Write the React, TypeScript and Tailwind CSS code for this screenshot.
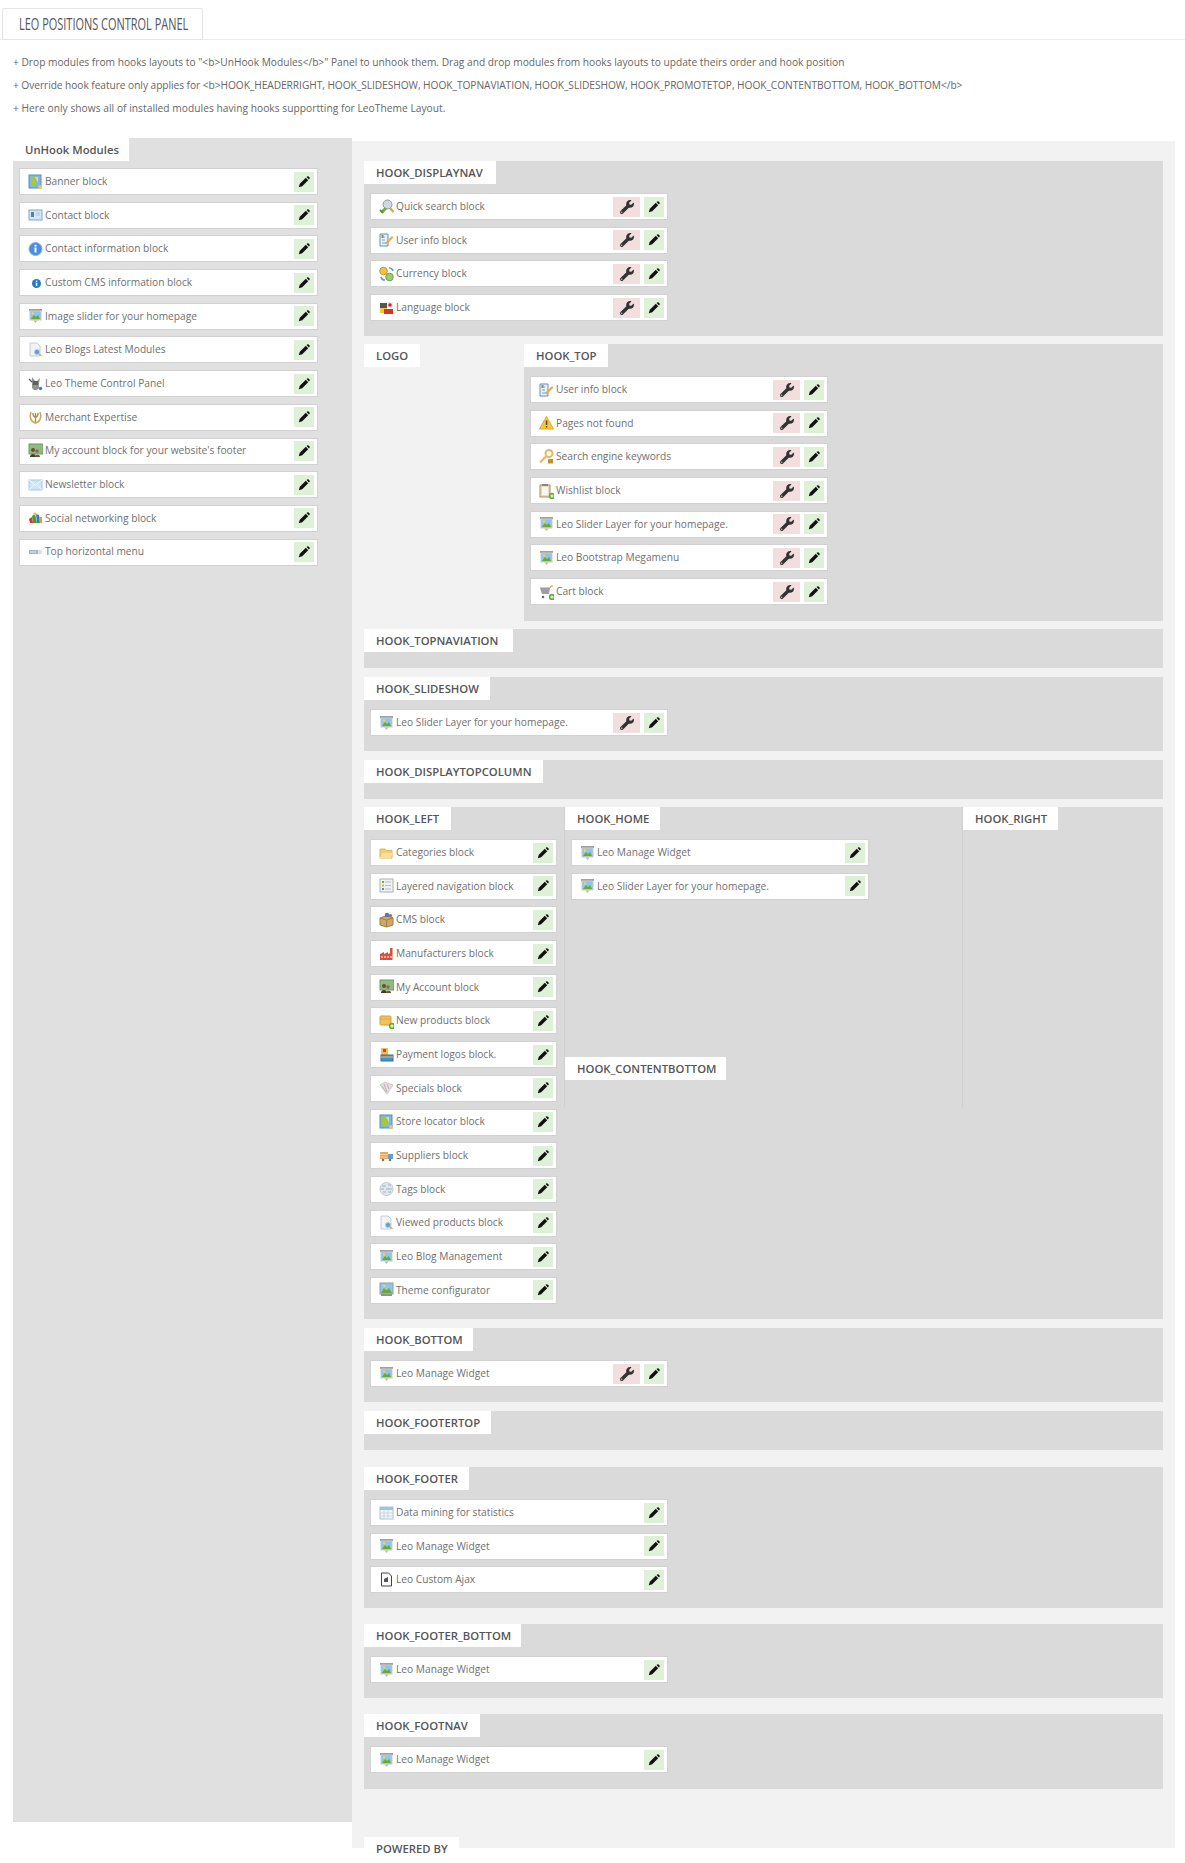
import type { ReactNode } from 'react';
import { FaWrench } from 'react-icons/fa';

type IconName =
  | 'map' | 'card' | 'infoBig' | 'info' | 'slider' | 'page' | 'tool' | 'medal' | 'people' | 'mail'
  | 'social' | 'menu' | 'search' | 'form' | 'coins' | 'flag' | 'warn' | 'key' | 'clip' | 'cart'
  | 'folder' | 'list' | 'box' | 'factory' | 'newbox' | 'pay' | 'tag' | 'truck' | 'cloud' | 'screen'
  | 'table' | 'doc';

const Plus = () => (
  <>
    <circle cx="13" cy="13" r="3.2" fill="#5cb030" />
    <path d="M11.3 13h3.4M13 11.3v3.4" stroke="#fff" strokeWidth="1" />
  </>
);

function Icon({ name }: { name: IconName }) {
  const parts: Record<IconName, ReactNode> = {
    map: (
      <>
        <rect x="1" y="1" width="12" height="13" fill="#7fb8df" stroke="#5a8fb5" />
        <path d="M3 2l4 1 2 9H3z" fill="#a8c83a" />
        <path d="M7 3l3 0v6z" fill="#e8d98a" />
        <circle cx="12" cy="13" r="2" fill="#f3c562" />
      </>
    ),
    card: (
      <>
        <rect x="1" y="3" width="13" height="10" fill="#d6e6f4" stroke="#7aa7cf" />
        <rect x="3" y="5" width="3" height="5" fill="#5b7fa3" />
        <path d="M8 6h4M8 8h4" stroke="#a9c4dc" />
      </>
    ),
    infoBig: (
      <>
        <circle cx="7.5" cy="8" r="6.5" fill="#4a8fd8" stroke="#7fb0e0" />
        <rect x="6.5" y="6.5" width="2" height="5" fill="#fff" />
        <rect x="6.5" y="3.8" width="2" height="1.8" fill="#fff" />
      </>
    ),
    info: (
      <>
        <circle cx="8.5" cy="8.5" r="4.5" fill="#1f7fc4" />
        <rect x="7.8" y="7.6" width="1.5" height="3.4" fill="#fff" />
        <rect x="7.8" y="5.6" width="1.5" height="1.3" fill="#fff" />
      </>
    ),
    slider: (
      <>
        <path d="M1 2h13" stroke="#777" strokeWidth="1.4" />
        <rect x="2" y="3" width="11" height="9" fill="#8cc6ea" stroke="#c9c9c9" />
        <path d="M3 11l3-4 2 2 2-2 2 4z" fill="#6ea92c" />
        <circle cx="5" cy="5.5" r="1.2" fill="#f4d54a" />
        <path d="M5.5 12.5h4L7.5 15z" fill="#bbb" />
      </>
    ),
    page: (
      <>
        <path d="M2 1h7l3 3v10H2z" fill="#f2f3f6" stroke="#c8ccd4" />
        <circle cx="9" cy="10" r="2.6" fill="#5aa0d8" stroke="#bcd" />
        <path d="M11 12l2.5 2" stroke="#e8a93a" strokeWidth="1.5" />
      </>
    ),
    tool: (
      <>
        <path d="M4 1l3 4h2l3-3-1 5v5l-2 2H6l-2-2V6z" fill="#8f9492" />
        <rect x="5" y="5" width="5" height="4" fill="#5b605e" />
        <path d="M1 3l3 3" stroke="#555" strokeWidth="1.2" />
        <circle cx="12.5" cy="12.5" r="1.8" fill="#3c84c8" />
      </>
    ),
    medal: (
      <>
        <path d="M3 3C1 8 3 13 7.5 14 12 13 14 8 12 3" fill="none" stroke="#c9a866" strokeWidth="1.6" />
        <path d="M7.5 4v9M5 4c0 3 1 4 2.500 4S10 7 10 4" fill="none" stroke="#b48a3c" strokeWidth="1.4" />
      </>
    ),
    people: (
      <>
        <rect x="1" y="1" width="14" height="10" fill="#8fbb82" stroke="#6d9a62" />
        <circle cx="5" cy="7" r="2" fill="#6d4b2f" />
        <path d="M2 14c0-4 6-4 6 0z" fill="#4b3a2b" />
        <circle cx="9" cy="8" r="1.700" fill="#8a6a45" />
        <path d="M7 14c0-3 5-3 5 0z" fill="#6b5236" />
      </>
    ),
    mail: (
      <>
        <rect x="1" y="3" width="13" height="10" fill="#cfe4f6" stroke="#a5c8e4" />
        <path d="M1 3l6.500 5L14 3M1 13l4.500-5M14 13L9.500 8" fill="none" stroke="#f2f8fd" />
      </>
    ),
    social: (
      <>
        <path d="M1 9l3-2 1 6H2z" fill="#d8392a" />
        <path d="M4 6l3-2 2 9H5z" fill="#4a9a34" />
        <path d="M8 4l3 1 1 8H9z" fill="#2d7fc4" />
        <path d="M11 7l3 0v6h-2z" fill="#e8a020" />
        <circle cx="7" cy="4" r="1.500" fill="#f2c230" />
      </>
    ),
    menu: (
      <>
        <rect x="1" y="6" width="9" height="4" fill="#9fb4c4" />
        <path d="M10 7h4M10 9h4" stroke="#b9c2c9" />
        <path d="M2 8h6" stroke="#eef2f5" />
      </>
    ),
    search: (
      <>
        <circle cx="8.500" cy="5.500" r="4.500" fill="#cfd9e4" stroke="#8a9aac" />
        <path d="M7 9l-4 4" stroke="#6fae3c" strokeWidth="3" />
        <path d="M11 9l3.500 4" stroke="#d9a03c" strokeWidth="2" />
        <path d="M1 11l3 3" stroke="#4f9a2c" strokeWidth="2" />
      </>
    ),
    form: (
      <>
        <path d="M1 2h8v12H1z" fill="#eaf2fa" stroke="#5b8fc0" />
        <path d="M3 5h3M3 8h3M3 11h4" stroke="#7aa0c4" />
        <path d="M6 11l7-7 1.500 1.500-7 7z" fill="#e9a93c" />
        <rect x="2.500" y="3" width="2" height="3" fill="#b9852e" />
      </>
    ),
    coins: (
      <>
        <circle cx="4.500" cy="5" r="3.800" fill="#f0c24a" stroke="#c99a2a" />
        <circle cx="10.500" cy="11" r="3.800" fill="#9ccb78" stroke="#6fa24a" />
        <path d="M10 2a4 4 0 014 3M6 14a4 4 0 01-4-3" fill="none" stroke="#5b9ad4" strokeWidth="1.600" />
      </>
    ),
    flag: (
      <>
        <rect x="1" y="3" width="7" height="5" fill="#555" />
        <rect x="1" y="8" width="7" height="5" fill="#f3c83a" />
        <rect x="8" y="2" width="6" height="6" fill="#e8eaec" />
        <circle cx="11" cy="5" r="1.800" fill="#e0202a" />
        <rect x="5" y="9" width="9" height="5" fill="#d8322c" />
      </>
    ),
    warn: (
      <>
        <path d="M7.500 1.500L14.500 14H.5z" fill="#f6c83c" stroke="#e0a820" />
        <rect x="6.800" y="5.500" width="1.500" height="4.500" fill="#5a4510" />
        <rect x="6.800" y="11" width="1.500" height="1.500" fill="#5a4510" />
      </>
    ),
    key: (
      <>
        <circle cx="10" cy="4.500" r="3.500" fill="none" stroke="#e8b85c" strokeWidth="2" />
        <path d="M7.500 7L1 13.500" stroke="#e8b85c" strokeWidth="2.200" />
        <rect x="9" y="10" width="5" height="4.500" fill="#c78f2c" />
      </>
    ),
    clip: (
      <>
        <rect x="1" y="2" width="10" height="12" fill="#e9dcc0" stroke="#a98f62" />
        <rect x="3" y="1" width="6" height="2" fill="#888" />
        <rect x="3" y="4" width="6" height="8" fill="#f6f6f2" />
        <Plus />
      </>
    ),
    cart: (
      <>
        <path d="M1 4h10l1-2h2" fill="none" stroke="#d98a3c" />
        <path d="M1 4h10l-1 6H3z" fill="#9aa0a4" />
        <circle cx="4" cy="13" r="1.300" fill="#666" />
        <Plus />
      </>
    ),
    folder: (
      <>
        <path d="M1 4h5l1 1.500h6V13H1z" fill="#f4cf72" stroke="#dcb45a" />
        <path d="M1 13l2-5h11l-2 5z" fill="#fadf98" />
      </>
    ),
    list: (
      <>
        <rect x="1" y="1" width="13" height="13" fill="#f0f2f2" stroke="#a9b2b6" />
        <path d="M3 4h2" stroke="#6fae3c" strokeWidth="2" />
        <path d="M3 7.500h2" stroke="#e8a93a" strokeWidth="2" />
        <path d="M3 11h2" stroke="#4a90d0" strokeWidth="2" />
        <path d="M6 4h6M6 7.500h6M6 11h6" stroke="#b5bdc2" />
      </>
    ),
    box: (
      <>
        <path d="M1 6l6.500-2.500L14 6v7l-6.500 2L1 13z" fill="#cfa868" stroke="#a47f44" />
        <path d="M7.500 8v7M1 6l6.500 2L14 6" fill="none" stroke="#a47f44" />
        <circle cx="8" cy="3" r="2.200" fill="#3d7fc4" />
        <circle cx="11.500" cy="3.500" r="1.600" fill="#d8552c" />
      </>
    ),
    factory: (
      <>
        <path d="M1 14V8l4-2v2l4-2v2l2-1V2h2.500v12z" fill="#d8513c" />
        <path d="M2 11h11" stroke="#f3c4b8" strokeDasharray="2 1" strokeWidth="1.400" />
      </>
    ),
    newbox: (
      <>
        <rect x="1" y="3" width="11" height="9" rx="1" fill="#f0c45c" stroke="#cf9f3c" />
        <path d="M1 6h11" stroke="#d8ac4c" />
        <Plus />
      </>
    ),
    pay: (
      <>
        <rect x="2" y="1" width="7" height="7" fill="#f4c04a" />
        <rect x="4" y="2" width="3" height="3" fill="#d8402c" />
        <rect x="2" y="8" width="12" height="6" fill="#4a90d0" stroke="#3570a8" />
        <path d="M2 10h12" stroke="#f0c04a" />
      </>
    ),
    tag: (
      <>
        <path d="M1 5l5-3 8 3-6 9z" fill="#dfe2e2" stroke="#c9cdcd" />
        <path d="M5 4l3 8M8 4l2 5" stroke="#d9a3ba" />
        <path d="M3 6l4 6" stroke="#a8cf9c" />
      </>
    ),
    truck: (
      <>
        <rect x="1" y="4" width="8" height="7" fill="#eda85c" />
        <path d="M1 6.500h8M1 9h8" stroke="#f6cf9c" />
        <rect x="9" y="6" width="5" height="5" fill="#6a9ccf" />
        <circle cx="4" cy="12" r="1.300" fill="#777" />
        <circle cx="11" cy="12" r="1.300" fill="#777" />
      </>
    ),
    cloud: (
      <>
        <circle cx="7.500" cy="8" r="6.500" fill="#dfe8ee" stroke="#bcc8d0" />
        <path d="M3 5h4M9 4h3M2 8h3M7 8h6M4 11h3M9 11h3" stroke="#9fb0bc" />
      </>
    ),
    screen: (
      <>
        <rect x="1" y="1" width="13" height="11" fill="#8cc6ea" stroke="#8f9ca6" />
        <path d="M2 11l3-5 2.500 2.500L10 6l3 5z" fill="#6ea92c" />
        <circle cx="5" cy="4" r="1.300" fill="#f4d54a" />
        <rect x="2" y="12" width="11" height="2" fill="#8d9498" />
      </>
    ),
    table: (
      <>
        <rect x="1" y="2" width="13" height="12" fill="#f4f8fb" stroke="#a9c4d8" />
        <rect x="1" y="2" width="13" height="3" fill="#9cc4e2" />
        <path d="M5 5v9M9 5v9M1 8h13M1 11h13" stroke="#c4d6e4" />
      </>
    ),
    doc: (
      <>
        <path d="M2.500 1h7l3 3v10h-10z" fill="#fafafa" stroke="#444" />
        <path d="M5 7l4-2v5H5z" fill="#555" />
      </>
    ),
  };
  return (
    <svg width="15" height="16" viewBox="0 0 15 16" className="shrink-0">
      {parts[name]}
    </svg>
  );
}

// slim glyphicon style pencil, tip at the bottom left
const Pencil = () => (
  <svg width="12" height="12" viewBox="0 0 12 12" fill="currentColor">
    <path d="M.8 11.200l1-3.400 6-6 2.400 2.400-6 6z" />
    <path d="M8.600 1.100l.6-.6a1 1 0 011.400 0l.9.900a1 1 0 010 1.400l-.6.6z" />
  </svg>
);

type Mod = { icon: IconName; label: string };

function Item({ icon, label, wrench, className }: Mod & { wrench?: boolean; className: string }) {
  return (
    <div className={`flex items-center h-[27px] mb-[6.7px] pl-[8px] pr-[3px] bg-white border border-[#d2d2d2] ${className}`}>
      <Icon name={icon} />
      <span className="ml-[2px] text-[10.2px] text-[#707070] whitespace-nowrap">{label}</span>
      {wrench && (
        <span className="ml-auto flex items-center justify-center w-[27px] h-[20px] bg-[#f2dede] text-[#333]">
          <FaWrench size={14} />
        </span>
      )}
      <span className={`${wrench ? 'ml-[4px]' : 'ml-auto'} flex items-center justify-center w-[20px] h-[20px] bg-[#dff0d8] text-[#111]`}>
        <Pencil />
      </span>
    </div>
  );
}

function Tab({ children, className }: { children: ReactNode; className: string }) {
  return (
    <div className={`h-[23px] pl-[12px] pt-[2px] flex items-center bg-white text-[11.3px] font-semibold text-[#555] whitespace-nowrap ${className}`}>
      {children}
    </div>
  );
}

function Items({ mods, wrench, className }: { mods: Mod[]; wrench?: boolean; className: string }) {
  return (
    <div className="pt-[9px] pl-[6px]">
      {mods.map((m) => (
        <Item key={m.label} {...m} wrench={wrench} className={className} />
      ))}
    </div>
  );
}

const unhook: Mod[] = [
  { icon: 'map', label: 'Banner block' },
  { icon: 'card', label: 'Contact block' },
  { icon: 'infoBig', label: 'Contact information block' },
  { icon: 'info', label: 'Custom CMS information block' },
  { icon: 'slider', label: 'Image slider for your homepage' },
  { icon: 'page', label: 'Leo Blogs Latest Modules' },
  { icon: 'tool', label: 'Leo Theme Control Panel' },
  { icon: 'medal', label: 'Merchant Expertise' },
  { icon: 'people', label: "My account block for your website's footer" },
  { icon: 'mail', label: 'Newsletter block' },
  { icon: 'social', label: 'Social networking block' },
  { icon: 'menu', label: 'Top horizontal menu' },
];

const displayNav: Mod[] = [
  { icon: 'search', label: 'Quick search block' },
  { icon: 'form', label: 'User info block' },
  { icon: 'coins', label: 'Currency block' },
  { icon: 'flag', label: 'Language block' },
];

const hookTop: Mod[] = [
  { icon: 'form', label: 'User info block' },
  { icon: 'warn', label: 'Pages not found' },
  { icon: 'key', label: 'Search engine keywords' },
  { icon: 'clip', label: 'Wishlist block' },
  { icon: 'slider', label: 'Leo Slider Layer for your homepage.' },
  { icon: 'slider', label: 'Leo Bootstrap Megamenu' },
  { icon: 'cart', label: 'Cart block' },
];

const hookLeft: Mod[] = [
  { icon: 'folder', label: 'Categories block' },
  { icon: 'list', label: 'Layered navigation block' },
  { icon: 'box', label: 'CMS block' },
  { icon: 'factory', label: 'Manufacturers block' },
  { icon: 'people', label: 'My Account block' },
  { icon: 'newbox', label: 'New products block' },
  { icon: 'pay', label: 'Payment logos block.' },
  { icon: 'tag', label: 'Specials block' },
  { icon: 'map', label: 'Store locator block' },
  { icon: 'truck', label: 'Suppliers block' },
  { icon: 'cloud', label: 'Tags block' },
  { icon: 'page', label: 'Viewed products block' },
  { icon: 'slider', label: 'Leo Blog Management' },
  { icon: 'screen', label: 'Theme configurator' },
];

const slider: Mod = { icon: 'slider', label: 'Leo Slider Layer for your homepage.' };
const widget: Mod = { icon: 'slider', label: 'Leo Manage Widget' };

export default function App() {
  return (
    <div className="w-[1185px] h-[1863px] overflow-hidden bg-white font-['Open_Sans',sans-serif]">
      {/* page heading */}
      <div className="pt-[8px] pl-[2px] h-[40px] border-b border-[#ebebeb]">
        <div className="w-[201px] h-[32px] pl-[16px] flex items-center bg-white border border-[#e4e4e4] rounded-t-[2px] text-[16px] text-[#555] whitespace-nowrap">
          <span className="inline-block origin-left scale-x-[0.685]">LEO POSITIONS CONTROL PANEL</span>
        </div>
      </div>

      <div className="pl-[13px] pt-[11px] h-[98px] text-[10.2px] leading-[23px] text-[#666] whitespace-nowrap">
        <p>+ Drop modules from hooks layouts to "&lt;b&gt;UnHook Modules&lt;/b&gt;" Panel to unhook them. Drag and drop modules from hooks layouts to update theirs order and hook position</p>
        <p className="tracking-[-0.055px]">+ Override hook feature only applies for &lt;b&gt;HOOK_HEADERRIGHT, HOOK_SLIDESHOW, HOOK_TOPNAVIATION, HOOK_SLIDESHOW, HOOK_PROMOTETOP, HOOK_CONTENTBOTTOM, HOOK_BOTTOM&lt;/b&gt;</p>
        <p className="tracking-[0.04px]">+ Here only shows all of installed modules having hooks supportting for LeoTheme Layout.</p>
      </div>

      <div className="flex items-start pl-[13px]">
        {/* unhook column */}
        <div className="w-[339px] h-[1684px] bg-[#e0e0e0]">
          <Tab className="w-[116px]">UnHook Modules</Tab>
          <div className="pt-[7px] pl-[6px]">
            {unhook.map((m) => (
              <Item key={m.label} {...m} className="w-[299px]" />
            ))}
          </div>
        </div>

        {/* layout column */}
        <div className="w-[823px] h-[1707px] mt-[3px] pt-[20px] pl-[12px] bg-[#f2f2f2]">
          <div className="w-[799px]">
            <div className="h-[175px] mb-[8px] bg-[#dadada]">
              <Tab className="w-[132px]">HOOK_DISPLAYNAV</Tab>
              <Items mods={displayNav} wrench className="w-[298px]" />
            </div>

            <div className="flex h-[277px] mb-[8px]">
              <div className="w-[160px]">
                <Tab className="w-[56px]">LOGO</Tab>
              </div>
              <div className="flex-1 bg-[#dadada]">
                <Tab className="w-[84px]">HOOK_TOP</Tab>
                <Items mods={hookTop} wrench className="w-[298px]" />
              </div>
            </div>

            <div className="h-[39px] mb-[9px] bg-[#dadada]">
              <Tab className="w-[149px]">HOOK_TOPNAVIATION</Tab>
            </div>

            <div className="h-[74px] mb-[9px] bg-[#dadada]">
              <Tab className="w-[126px]">HOOK_SLIDESHOW</Tab>
              <Items mods={[slider]} wrench className="w-[298px]" />
            </div>

            <div className="h-[39px] mb-[8px] bg-[#dadada]">
              <Tab className="w-[179px]">HOOK_DISPLAYTOPCOLUMN</Tab>
            </div>

            <div className="flex h-[512px] mb-[9px] bg-[#dadada]">
              <div className="w-[200px]">
                <Tab className="w-[87px]">HOOK_LEFT</Tab>
                <Items mods={hookLeft} className="w-[187px]" />
              </div>
              <div className="w-[398px] h-[301px] border-l border-[#d0d0d0]">
                <div className="h-[250px]">
                  <Tab className="w-[95px]">HOOK_HOME</Tab>
                  <Items mods={[widget, slider]} className="w-[298px]" />
                </div>
                <Tab className="w-[161px]">HOOK_CONTENTBOTTOM</Tab>
              </div>
              <div className="flex-1 h-[301px] border-l border-[#d0d0d0]">
                <Tab className="w-[95px]">HOOK_RIGHT</Tab>
              </div>
            </div>

            <div className="h-[74px] mb-[9px] bg-[#dadada]">
              <Tab className="w-[109px]">HOOK_BOTTOM</Tab>
              <Items mods={[widget]} wrench className="w-[298px]" />
            </div>

            <div className="h-[39px] mb-[17px] bg-[#dadada]">
              <Tab className="w-[127px]">HOOK_FOOTERTOP</Tab>
            </div>

            <div className="h-[141px] mb-[16px] bg-[#dadada]">
              <Tab className="w-[105px]">HOOK_FOOTER</Tab>
              <Items
                mods={[{ icon: 'table', label: 'Data mining for statistics' }, widget, { icon: 'doc', label: 'Leo Custom Ajax' }]}
                className="w-[298px]"
              />
            </div>

            <div className="h-[74px] mb-[16px] bg-[#dadada]">
              <Tab className="w-[157px]">HOOK_FOOTER_BOTTOM</Tab>
              <Items mods={[widget]} className="w-[298px]" />
            </div>

            <div className="h-[75px] mb-[48px] bg-[#dadada]">
              <Tab className="w-[116px]">HOOK_FOOTNAV</Tab>
              <Items mods={[widget]} className="w-[298px]" />
            </div>

            <Tab className="w-[95px]">POWERED BY</Tab>
          </div>
        </div>
      </div>
    </div>
  );
}
